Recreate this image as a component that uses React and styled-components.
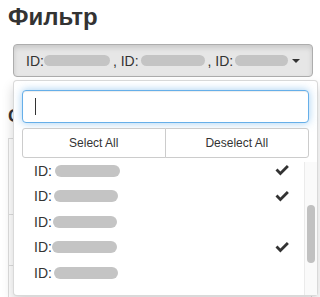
import React, { useLayoutEffect, useRef } from "react";
import styled, { createGlobalStyle } from "styled-components";

const GlobalStyle = createGlobalStyle`
  html, body { margin: 0; padding: 0; background: #fff; }
  body {
    font-family: "Liberation Sans", Arial, Helvetica, sans-serif;
    font-size: 14px;
    color: #333;
  }
  * { box-sizing: border-box; }
`;

const Page = styled.div`
  width: 320px;
  height: 297px;
  overflow: hidden;
  padding: 0 8px;
`;

const Title = styled.h3`
  margin: 4px 0 0;
  font-size: 24px;
  line-height: 26px;
  font-weight: 700;
  color: #333;
`;

const FilterWrap = styled.div`
  position: relative;
  width: 300px;
  margin: 14px 0 0 5px;
`;

const Toggle = styled.div`
  display: flex;
  align-items: center;
  height: 33px;
  width: 300px;
  padding: 0 12px;
  border: 1px solid #adadad;
  border-radius: 4px;
  background: #e6e6e6;
  box-shadow: inset 0 3px 5px rgba(0, 0, 0, 0.125);
  font-size: 14px;
  line-height: 20px;
  color: #333;
  white-space: nowrap;
`;

const Label = styled.span`
  margin-left: ${(p) => p.$gap || 0}px;
`;

const Pill = styled.span`
  display: inline-block;
  flex: none;
  width: ${(p) => p.$w}px;
  height: ${(p) => p.$h || 12}px;
  border-radius: 6px;
  background: #c4c4c4;
  margin-left: ${(p) => p.$gap || 0}px;
`;

const CaretDown = styled.span`
  margin-left: auto;
  width: 0;
  height: 0;
  border-top: 4px solid #333;
  border-left: 4px solid transparent;
  border-right: 4px solid transparent;
`;

const Menu = styled.div`
  position: absolute;
  top: calc(100% + 3px);
  left: 0;
  width: 305px;
  z-index: 10;
  background: #fff;
  border: 1px solid rgba(0, 0, 0, 0.15);
  border-radius: 4px;
  box-shadow: 0 6px 12px rgba(0, 0, 0, 0.175);
  padding-top: 9px;
`;

const SearchBox = styled.div`
  padding: 0 8px;
`;

const SearchField = styled.div`
  display: flex;
  align-items: center;
  height: 33px;
  padding: 0 12px;
  border: 1px solid #66afe9;
  border-radius: 4px;
  background: #fff;
  box-shadow: inset 0 1px 1px rgba(0, 0, 0, 0.075),
    0 0 8px rgba(102, 175, 233, 0.6);
`;

const TextCaret = styled.span`
  width: 1px;
  height: 17px;
  background: #333;
`;

const Actions = styled.div`
  display: grid;
  grid-template-columns: 1fr 1fr;
  margin: 5px 8px 0;
`;

const ActionButton = styled.div`
  display: flex;
  align-items: center;
  justify-content: center;
  height: 30px;
  border: 1px solid #ccc;
  background: #fff;
  font-size: 12px;
  color: #333;
  border-radius: ${(p) => (p.$side === "left" ? "3px 0 0 3px" : "0 3px 3px 0")};
  margin-left: ${(p) => (p.$side === "left" ? 0 : -1)}px;
`;

const ListArea = styled.div`
  display: flex;
  margin-top: 4px;
  height: 133px;
`;

const Viewport = styled.div`
  flex: 1;
  height: 130px;
  overflow: hidden;
`;

const Track = styled.div`
  width: 13px;
  height: 133px;
  background: #fafafa;
  border-left: 1px solid #ebebeb;
  padding-left: 2px;
`;

const Thumb = styled.div`
  width: 8px;
  height: ${(p) => p.$h}px;
  margin-top: ${(p) => p.$top}px;
  border-radius: 4px;
  background: #c1c1c1;
`;

const Row = styled.div`
  display: flex;
  align-items: center;
  height: 25.5px;
  padding: 0 14px 0 20px;
  font-size: 14px;
  line-height: 20px;
  color: #333;
`;

const CheckIcon = styled.svg`
  margin-left: auto;
  flex: none;
`;

const Section = styled.h4`
  margin: 30px 0 0;
  font-size: 18px;
  line-height: 19.8px;
  font-weight: 700;
  color: #333;
`;

const Table = styled.div`
  margin-top: 11px;
  width: 304px;
  border: 1px solid #ddd;
`;

const TableRow = styled.div`
  height: ${(p) => p.$h}px;
  border-top: ${(p) => (p.$first ? "none" : "1px solid #ddd")};
`;

const Check = () => (
  <CheckIcon width="15" height="11" viewBox="0 0 15 11">
    <path d="M0.5 5.6 L2.5 3.6 L5.4 6.5 L11.9 0 L13.9 2 L5.4 10.5 Z" fill="#333" />
  </CheckIcon>
);

const rows = [
  { w: 64, gap: 3, checked: false },
  { w: 62, gap: 2, checked: true },
  { w: 66, gap: 3, checked: false },
  { w: 60, gap: 2, checked: true },
  { w: 65, gap: 3, checked: true },
  { w: 64, gap: 2, checked: true },
  { w: 64, gap: 1, checked: false },
  { w: 65, gap: 0, checked: true },
  { w: 64, gap: 2, checked: false },
  { w: 63, gap: 2, checked: false },
  { w: 66, gap: 3, checked: false },
  { w: 62, gap: 2, checked: false },
];

const SCROLL_TOP = 106;
const TRACK = 133;
const CONTENT = rows.length * 25.5;

export default function App() {
  const listRef = useRef(null);
  useLayoutEffect(() => {
    if (listRef.current) listRef.current.scrollTop = SCROLL_TOP;
  }, []);

  const thumbH = Math.round((TRACK * TRACK) / CONTENT);
  const thumbTop = 43;

  return (
    <>
      <GlobalStyle />
      <Page>
        <Title>Фильтр</Title>
        <FilterWrap>
          <Toggle>
            <Label>ID:</Label>
            <Pill $w={66} $h={11} />
            <Label $gap={3}>, ID:</Label>
            <Pill $w={64} $h={11} $gap={2} />
            <Label $gap={3}>, ID:</Label>
            <Pill $w={53} $h={11} $gap={2} />
            <CaretDown />
          </Toggle>
          <Menu>
            <SearchBox>
              <SearchField>
                <TextCaret />
              </SearchField>
            </SearchBox>
            <Actions>
              <ActionButton $side="left">Select All</ActionButton>
              <ActionButton $side="right">Deselect All</ActionButton>
            </Actions>
            <ListArea>
              <Viewport ref={listRef}>
                {rows.map((r, i) => (
                  <Row key={i}>
                    <span>ID:</span>
                    <Pill $w={r.w} $gap={r.gap} />
                    {r.checked && <Check />}
                  </Row>
                ))}
              </Viewport>
              <Track>
                <Thumb $h={thumbH} $top={thumbTop} />
              </Track>
            </ListArea>
          </Menu>
        </FilterWrap>
        <Section>Список</Section>
        <Table>
          <TableRow $h={75} $first />
          <TableRow $h={51} />
          <TableRow $h={51} />
        </Table>
      </Page>
    </>
  );
}
